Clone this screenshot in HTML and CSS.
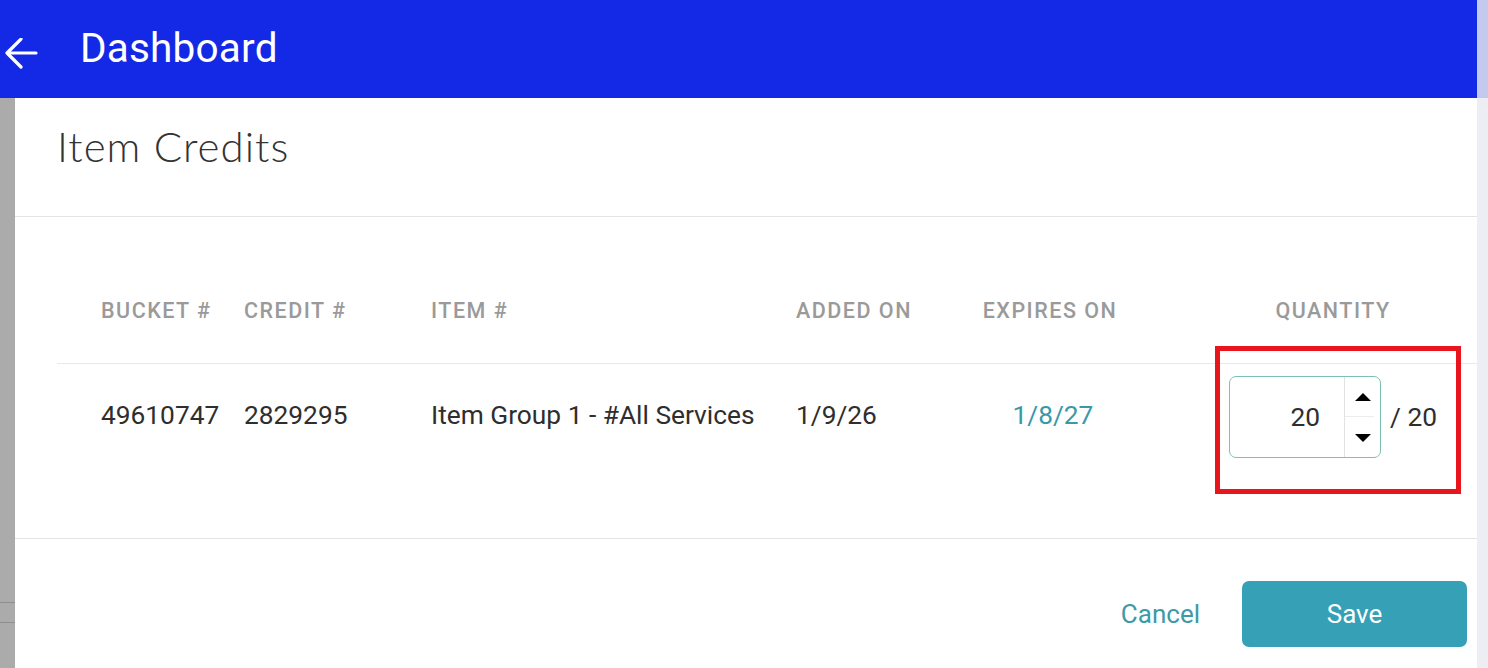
FILE: index.html
```html
<!DOCTYPE html>
<html>
<head>
<meta charset="utf-8">
<link rel="stylesheet" href="styles.css">
</head>
<body>
<div class="page">
  <header class="topbar">
    <svg class="back" width="34" height="32" viewBox="0 0 34 32">
      <path d="M3 15 H32 M17 1 L3 15 L17 29" fill="none" stroke="#fff" stroke-width="3.2" stroke-linecap="round" stroke-linejoin="round"/>
    </svg>
    <h1 class="topbar-title">Dashboard</h1>
  </header>
  <div class="body">
    <div class="backdrop-left">
      <div class="bd-line one"></div>
      <div class="bd-line two"></div>
    </div>
    <main class="panel">
      <div class="panel-head">
        <h2 class="panel-title">Item Credits</h2>
      </div>
      <div class="panel-table">
        <div class="row head">
          <div class="cell">BUCKET #</div>
          <div class="cell">CREDIT #</div>
          <div class="cell">ITEM #</div>
          <div class="cell">ADDED ON</div>
          <div class="cell center">EXPIRES ON</div>
          <div class="cell center">QUANTITY</div>
        </div>
        <div class="row data">
          <div class="cell">49610747</div>
          <div class="cell">2829295</div>
          <div class="cell">Item Group 1 - #All Services</div>
          <div class="cell">1/9/26</div>
          <div class="cell center teal">1/8/27</div>
          <div class="cell center qty-cell">
            <div class="qty-input">
              <span class="qty-value">20</span>
              <div class="spinner">
                <div class="spin up"><span class="tri-up"></span></div>
                <div class="spin down"><span class="tri-down"></span></div>
              </div>
            </div>
            <span class="qty-total">/ 20</span>
            <div class="highlight"></div>
          </div>
        </div>
      </div>
      <div class="panel-foot">
        <button class="btn-cancel">Cancel</button>
        <button class="btn-save">Save</button>
      </div>
    </main>
    <div class="backdrop-right"></div>
  </div>
</div>
</body>
</html>
```

FILE: styles.css
```css
* { box-sizing: border-box; }
html, body { margin: 0; padding: 0; }
body {
  width: 1488px;
  height: 668px;
  overflow: hidden;
  font-family: Roboto, "Liberation Sans", sans-serif;
  background: #ffffff;
}
.page { display: flex; flex-direction: column; height: 668px; }
.topbar {
  height: 98px;
  background: #1429e6;
  display: flex;
  align-items: center;
  padding-left: 4px;
  margin-right: 11px;
  position: relative;
}
.topbar::after {
  content: "";
  position: absolute;
  top: 0; right: -11px;
  width: 11px; height: 98px;
  background: #c4c9ee;
}
.back { display: block; margin-top: 9px; }
.topbar-title {
  margin: 0 0 0 42px;
  color: #fff;
  font-weight: 400;
  font-size: 40.5px;
  letter-spacing: 0.2px;
  margin-top: -3px;
}
.body { display: flex; flex: 1; min-height: 0; }
.backdrop-left {
  width: 15px;
  background: #ababab;
  position: relative;
}
.bd-line { position: absolute; left: 0; width: 15px; height: 1px; }
.bd-line.one { top: 504px; background: #8e8e8e; }
.bd-line.two { top: 524px; background: #8e8e8e; }
.backdrop-right { width: 11px; background: #eceef3; }
.panel { flex: 1; background: #fff; display: flex; flex-direction: column; }
.panel-head {
  height: 119px;
  border-bottom: 1px solid #e4e4e4;
  padding: 23px 0 0 42px;
}
.panel-title {
  margin: 0;
  font-family: Lato, "Open Sans", sans-serif;
  font-weight: 300;
  font-size: 42px;
  color: #333;
  letter-spacing: 1px;
}
.panel-table {
  padding: 38px 0 0 42px;
  height: 322px;
  border-bottom: 1px solid #e4e4e4;
}
.row {
  display: grid;
  grid-template-columns: 143px 187px 365px 114px 280px 286px;
  padding-left: 44px;
  align-items: center;
}
.row.head {
  height: 109px;
  border-bottom: 1px solid #e8e8e8;
  padding-top: 2px;
}
.row.head .cell {
  font-weight: 500;
  font-size: 21.5px;
  letter-spacing: 1.5px;
  color: #9a9a9a;
  white-space: nowrap;
}
.row.data { height: 102px; }
.row.data .cell {
  font-size: 26.3px;
  color: #2e2e2e;
  white-space: nowrap;
}
.cell.center { text-align: center; }
.row.data .cell.teal { color: #3a98a8; padding-left: 6px; }
.qty-cell {
  position: relative;
  align-self: stretch;
  display: flex;
  align-items: center;
  justify-content: center;
  padding-top: 3px;
}
.qty-input {
  width: 152px;
  height: 82px;
  border: 1px solid #7cc1b4;
  border-radius: 7px;
  display: flex;
  align-items: stretch;
}
.qty-value {
  flex: 1;
  text-align: right;
  padding-right: 24px;
  display: flex;
  align-items: center;
  justify-content: flex-end;
}
.spinner {
  width: 36px;
  border-left: 1px solid #e2e2e2;
  display: flex;
  flex-direction: column;
}
.spin { flex: 1; display: flex; align-items: center; justify-content: center; }
.spin.up { border-bottom: 1px solid #ececec; margin-right: 6px; padding-left: 6px; }
.tri-up {
  width: 0; height: 0;
  border-left: 8px solid transparent;
  border-right: 8px solid transparent;
  border-bottom: 8px solid #000;
  margin-top: 2px;
}
.tri-down {
  width: 0; height: 0;
  border-left: 8px solid transparent;
  border-right: 8px solid transparent;
  border-top: 8px solid #000;
  margin-top: 2px;
}
.qty-total { margin-left: 9px; }
.highlight {
  position: absolute;
  left: 25px;
  top: -18px;
  width: 246px;
  height: 148px;
  border: 5px solid #e8161c;
  pointer-events: none;
}
.panel-foot {
  display: flex;
  justify-content: flex-end;
  align-items: flex-start;
  padding: 42px 10px 0 0;
  gap: 42px;
}
.btn-cancel {
  background: none;
  border: 0;
  padding: 0;
  font-family: Roboto, "Liberation Sans", sans-serif;
  font-size: 26px;
  color: #3d9aa6;
  height: 66px;
}
.btn-save {
  width: 225px;
  height: 66px;
  background: #35a0b6;
  border: 0;
  border-radius: 7px;
  color: #fff;
  font-family: Roboto, "Liberation Sans", sans-serif;
  font-size: 26px;
}
```
